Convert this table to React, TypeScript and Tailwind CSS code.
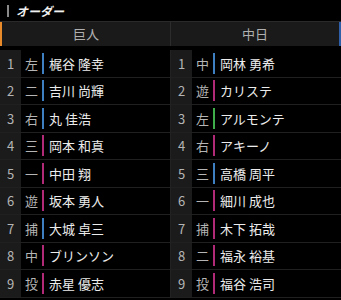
import React from "react";

type Player = { pos: string; name: string; color: "blue" | "pink" | "green" };

const giants: Player[] = [
  { pos: "左", name: "梶谷 隆幸", color: "blue" },
  { pos: "二", name: "吉川 尚輝", color: "blue" },
  { pos: "右", name: "丸 佳浩", color: "blue" },
  { pos: "三", name: "岡本 和真", color: "pink" },
  { pos: "一", name: "中田 翔", color: "pink" },
  { pos: "遊", name: "坂本 勇人", color: "pink" },
  { pos: "捕", name: "大城 卓三", color: "blue" },
  { pos: "中", name: "ブリンソン", color: "pink" },
  { pos: "投", name: "赤星 優志", color: "pink" },
];

const dragons: Player[] = [
  { pos: "中", name: "岡林 勇希", color: "blue" },
  { pos: "遊", name: "カリステ", color: "pink" },
  { pos: "左", name: "アルモンテ", color: "green" },
  { pos: "右", name: "アキーノ", color: "pink" },
  { pos: "三", name: "高橋 周平", color: "blue" },
  { pos: "一", name: "細川 成也", color: "pink" },
  { pos: "捕", name: "木下 拓哉", color: "pink" },
  { pos: "二", name: "福永 裕基", color: "pink" },
  { pos: "投", name: "福谷 浩司", color: "pink" },
];

const barClass = {
  blue: "bg-[#3d7fc0]",
  pink: "bg-[#b02a78]",
  green: "bg-[#3fae4a]",
};

function Lineup({ players }: { players: Player[] }) {
  return (
    <div className="flex flex-col">
      {players.map((p, i) => (
        <div key={p.name} className="flex h-[27.5px] items-stretch border-b border-[#202020]">
          <div className="flex w-[21px] items-center justify-center bg-[#1b1b1b] text-[13px] text-[#b5b5b5]">
            {i + 1}
          </div>
          <div className="flex w-[21px] items-center justify-center text-[13px] text-[#b5b5b5]">
            {p.pos}
          </div>
          <div className="flex items-center">
            <div className={`h-[21px] w-[2px] ${barClass[p.color]}`} />
          </div>
          <div className="flex items-center pl-[5px] text-[13px] text-[#ececec]">{p.name}</div>
        </div>
      ))}
    </div>
  );
}

export default function App() {
  return (
    <div
      className="h-[300px] w-[341px] overflow-hidden bg-black"
      style={{ fontFamily: '"Noto Sans CJK JP", "Noto Sans", sans-serif' }}
    >
      <div className="flex h-[21px] items-center pl-[7px]">
        <div className="h-[12px] w-[2px] bg-[#8a8a8a]" />
        <span className="ml-[7px] text-[12px] font-bold italic leading-none text-[#f0f0f0]">オーダー</span>
      </div>
      <div className="flex h-[25px] border-t border-[#2a2a2a] bg-[#1a1a1a]">
        <div className="w-[2px] bg-[#e8892a]" />
        <div className="flex flex-1 items-center justify-center text-[13px] text-[#b0b0b0]">巨人</div>
        <div className="w-px bg-[#2c2c2c]" />
        <div className="flex flex-1 items-center justify-center text-[13px] text-[#b0b0b0]">中日</div>
        <div className="w-[2px] bg-[#2f5fa8]" />
      </div>
      <div className="mt-[4px] flex">
        <div className="flex-1">
          <Lineup players={giants} />
        </div>
        <div className="w-px bg-[#222]" />
        <div className="flex-1">
          <Lineup players={dragons} />
        </div>
      </div>
    </div>
  );
}
